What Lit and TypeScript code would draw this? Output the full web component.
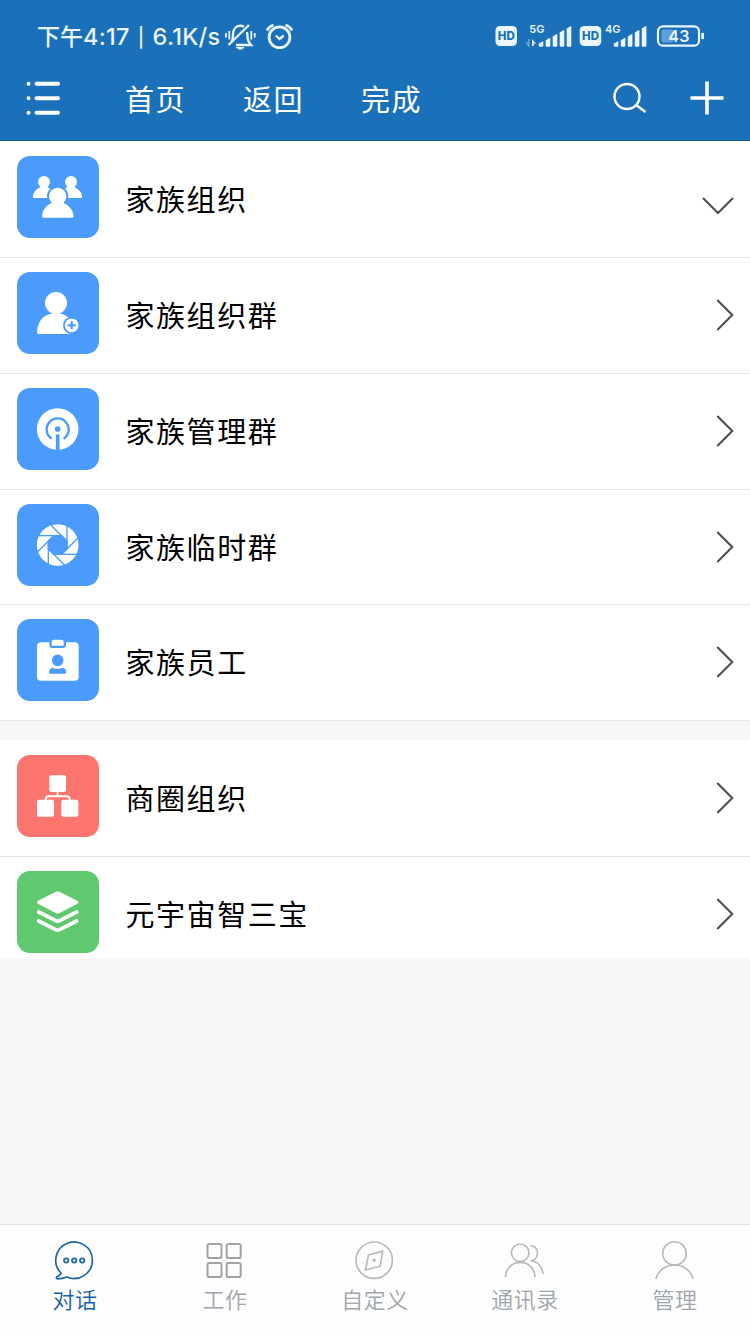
import { LitElement, html, css, svg } from "lit";
import { customElement, property } from "lit/decorators.js";

const tileIcons: Record<string, unknown> = {
  people: svg`
    <g fill="#fff">
      <circle cx="81" cy="78" r="18"/><path d="M48 124q0-16 13-25q10-8 20-8q10 0 20 8q13 9 13 25q0 2-2 2H50q-2 0-2-2z"/>
      <circle cx="162" cy="78" r="18"/><path d="M129 124q0-16 13-25q10-8 20-8q10 0 20 8q13 9 13 25q0 2-2 2H131q-2 0-2-2z"/>
      <circle cx="122" cy="121" r="32" fill="#4a9bfb"/>
      <path d="M75 180q1-20 19-34q14-9 28-9q14 0 28 9q18 14 20 34q0 5-5 5H80q-5 0-5-5z"/>
      <circle cx="122" cy="121" r="26"/>
    </g>`,
  personAdd: svg`
    <g fill="#fff">
      <circle cx="117" cy="93" r="33"/>
      <path d="M60 181q1-30 20-46q18-12 37-12q19 0 37 13q16 13 16 50H65q-5 0-5-5z"/>
      <circle cx="164" cy="160" r="26" fill="#4a9bfb"/><circle cx="164" cy="160" r="20.500"/>
      <path d="M164 148v24M152 160h24" stroke="#4a9bfb" stroke-width="6.500"/>
    </g>`,
  podcast: svg`
    <circle cx="122" cy="123" r="62.500" fill="#fff"/>
    <path d="M104 152A33 33 0 1 1 140 152" fill="none" stroke="#4a9bfb" stroke-width="7"/>
    <circle cx="122" cy="123" r="8.500" fill="#4a9bfb"/><path d="M122 139v48" stroke="#4a9bfb" stroke-width="11"/>`,
  aperture: svg`
    <circle cx="122" cy="123" r="62.500" fill="#fff"/>
    <g transform="translate(122 123)" fill="none" stroke="#4a9bfb" stroke-width="4">
      <path d="M-11.600-28H11.600L28-11.600V11.600L11.600 28H-11.600L-28 11.600V-11.600z" fill="#4a9bfb"/>
      ${[0, 45, 90, 135, 180, 225, 270, 315].map((a) => svg`<path d="M-57-28H11" transform="rotate(${a})"/>`)}
    </g>`,
  badge: svg`
    <rect x="60" y="70" width="125" height="115" rx="12" fill="#fff"/>
    <path d="M97 66H147V78q0 9-9 9H106q-9 0-9-9z" fill="#4a9bfb"/>
    <path d="M104 80V69q0-7 8-7h20q8 0 8 7V80z" fill="#fff"/>
    <circle cx="122" cy="124" r="17.500" fill="#4a9bfb"/>
    <path d="M96 160q0-10 10-14q16 7 32 0q10 4 10 14q0 4-4 4H100q-4 0-4-4z" fill="#4a9bfb"/>`,
  sitemap: svg`
    <g fill="#fff"><rect x="97" y="61" width="50" height="50" rx="6"/><rect x="60" y="134" width="51" height="51" rx="6"/><rect x="133" y="134" width="51" height="51" rx="6"/></g>
    <path d="M122 108v16M86 138v-5q0-9 9-9h54q9 0 9 9v5" fill="none" stroke="#fff" stroke-width="6"/>`,
  layers: svg`
    <path d="M117 62q5-2 10 0l54 27q6 4 0 9l-53 28q-6 3-12 0L63 98q-6-5 0-9z" fill="#fff"/>
    <path d="M65 123l51 26q6 3 12 0l51-26M65 150l51 26q6 3 12 0l51-26" fill="none" stroke="#fff" stroke-width="11" stroke-linecap="round"/>`,
};

const tabIcons: Record<string, unknown> = {
  chat: svg`<path d="M6 32A18.300 18.300 0 1 1 11.800 36Q7.500 37.800 2.200 37.800Q.8 37.400 1.800 36Q6 33.500 6 32z" stroke-width="1.700"/>
    <g stroke-width="1.700"><circle cx="11.200" cy="19.500" r="2.200"/><circle cx="19.200" cy="19.500" r="2.200"/><circle cx="27.200" cy="19.500" r="2.200"/></g>`,
  grid: svg`<g stroke-width="2"><rect x="2.500" y="3" width="14" height="14" rx="1.800"/><rect x="21.700" y="3" width="14" height="14" rx="1.800"/>
    <rect x="2.500" y="22" width="14" height="14" rx="1.800"/><rect x="21.700" y="22" width="14" height="14" rx="1.800"/></g>`,
  compass: svg`<circle cx="19.200" cy="19.200" r="18.200"/><path d="M13.500 14L27.800 10.200L25.200 25.200L10.500 29z"/><circle cx="19.200" cy="19.200" r="1"/>`,
  contacts: svg`<circle cx="15.200" cy="11.800" r="8.800"/><path d="M.5 36C1 16.500 29.700 16.500 30 36M25.500 4.700C34.800 4.500 34.800 19.300 25.500 19.800C33 20.300 37.800 26 38 33"/>`,
  person: svg`<circle cx="19.500" cy="12.400" r="11.700"/><path d="M.8 38C6 19.300 33 19.300 38.200 38"/>`,
};

@customElement("list-row")
class ListRow extends LitElement {
  @property() label = "";
  @property() icon = "";
  @property() tone = "blue";
  @property({ type: Boolean }) open = false;
  static styles = css`
    :host { display: flex; box-sizing: border-box; height: 115.850px; padding: 15px 16px 0 17px; background: #fff; box-shadow: inset 0 1px 0 #e7e7e7, 0 1px 0 #e7e7e7; }
    :host(.first) { box-shadow: none; }
    :host(.final) { height: 102px; box-shadow: inset 0 1px 0 #e7e7e7; }
    .tile { width: 82px; height: 82px; flex: none; border-radius: 13px; }
    .blue { background: #4a9bfb; }
    .red { background: #fc766f; }
    .green { background: #60c970; }
    .tile svg { display: block; width: 82px; height: 82px; }
    .label { flex: 1; margin-left: 26.500px; height: 84px; line-height: 84px; font-size: 29px; letter-spacing: 1.550px; color: #000; }
    .arrow { width: 32px; height: 32px; margin-top: 27px; fill: none; stroke: #4c4c4e; stroke-width: 2; }
    .down { margin-top: 34px; }
  `;
  render() {
    return html`
      <div class="tile ${this.tone}"><svg viewBox="0 0 246 246">${tileIcons[this.icon]}</svg></div>
      <div class="label">${this.label}</div>
      ${this.open
        ? html`<svg class="arrow down" viewBox="0 0 32 32"><path d="M1 8L16 23L31 8"/></svg>`
        : html`<svg class="arrow" viewBox="0 0 32 32"><path d="M15.300 1L30.300 16L15.300 31"/></svg>`}
    `;
  }
}

@customElement("app-root")
class AppRoot extends LitElement {
  static styles = css`
    :host { display: flex; flex-direction: column; height: 1334px; width: 750px; overflow: hidden; background: #f7f7f7; font-family: "Noto Sans CJK SC", sans-serif; }
    header { height: 141px; background: #1a70b9; color: #fff; flex: none; box-sizing: border-box; border-bottom: 1px solid #0e5fa8; }
    .status { display: flex; padding: 12px 43px 0 37px; align-items: center; color: #eaf5fc; box-sizing: border-box; height: 62px; }
    .clock { width: 187px; white-space: pre; font-size: 23px; font-weight: 500; line-height: 30px; margin-top: -1px; }
    .latin { font-family: Inter, sans-serif; font-size: 23.500px; letter-spacing: 0.250px; }
    .bar { font-size: 19px; margin: 0 1.500px; position: relative; top: -1px; }
    .modes { width: 72px; height: 30px; }
    .signal { width: 212px; height: 30px; margin-left: auto; }
    .signal text { font-family: Inter, sans-serif; font-weight: 600; }
    .signal .hd { font-weight: 800; }
    .nav { display: flex; align-items: center; height: 72px; padding: 0 26px; }
    .menu { width: 36px; height: 36px; margin-right: 63px; }
    .link { font-size: 29px; letter-spacing: 1.450px; line-height: 44px; margin-right: 57.100px; margin-top: -1px; }
    .search { width: 36px; height: 36px; margin-left: auto; }
    .plus { width: 34px; height: 34px; margin-left: 42px; }
    .gap { height: 19.700px; }
    main { flex: 1; }
    footer { display: grid; grid-template-columns: repeat(5, 1fr); height: 110px; box-sizing: border-box; border-top: 1px solid #e2e2e2; background: #fdfdfd; flex: none; }
    .tab { display: flex; flex-direction: column; align-items: center; padding-top: 16px; color: #a0a6ad; }
    .tab svg { width: 39px; height: 40px; margin-left: -1px; fill: none; stroke: #b8b8b8; stroke-width: 1.600; overflow: visible; }
    .tab .grid { stroke: #a3a3a3; }
    .tab .chat { stroke: #1a66a5; }
    .tab span { font-size: 22px; letter-spacing: 0.500px; line-height: 32px; margin-top: 1px; font-weight: 350; }
    .active { color: #14609f; }
  `;
  render() {
    const bars = (x: number) =>
      [41.3, 37.7, 34, 30, 26].map((y, i) => svg`<path d="M${x + i * 7} 45.500V${y + 2.5}L${x + i * 7 + 3.6} ${y + 0.3}H${x + i * 7 + 4.6}V45.500q0 1.300-1.300 1.300h-2q-1.300 0-1.300-1.300z"/>`);
    const tabs = [["chat", "对话"], ["grid", "工作"], ["compass", "自定义"], ["contacts", "通讯录"], ["person", "管理"]];
    return html`
      <header>
        <div class="status">
          <div class="clock">下午<span class="latin">4:17 <span class="bar">|</span> 6.1K/s</span></div>
          <svg class="modes" viewBox="224 22 72 30" fill="none" stroke="#eaf5fc" stroke-width="2.400">
            <path d="M231.500 42.500Q233 40 233 35C233 29 236 25.800 240 25.800Q242 25.800 244 26.800M247 32Q247.500 35 247.500 37Q248 42 251 45H236M228.500 45L249 25"/>
            <path d="M236.500 47.500H244Q240.500 51 236.500 47.500z" fill="#eaf5fc" stroke-width="1"/>
            <path d="M226 33v4.500M229.300 31v8.500M251.300 31v8.500M254.700 33v4.500" stroke-width="1.800"/>
            <circle cx="279.500" cy="37.300" r="10.400" stroke-width="2.800"/>
            <path d="M267 30.500Q269 26.500 273.500 25M292 30.500Q290 26.500 285.500 25" stroke-width="2.800"/>
            <path d="M275.800 35.500L279.500 39L283.800 35.500" stroke-width="2.400"/>
          </svg>
          <svg class="signal" viewBox="495 22 212 30" fill="#eaf5fc">
            <rect x="495.500" y="26" width="21.500" height="20" rx="4.500"/>
            <text class="hd" x="506.300" y="40.200" font-size="11.500" text-anchor="middle" fill="#1a70b9">HD</text>
            <text x="529.300" y="32.800" font-size="11">5G</text>
            <path d="M526 42l2.800 4V39M528.800 46V39" stroke="#7fb0dc" stroke-width="1.200" fill="none"/>
            <path d="M532 46V39l4 4.500h-2.200V46z"/>
            ${bars(538.7)}
            <rect x="579.700" y="26" width="21.500" height="20" rx="4.500"/>
            <text class="hd" x="590.500" y="40.200" font-size="11.500" text-anchor="middle" fill="#1a70b9">HD</text>
            <text x="605" y="32.800" font-size="11">4G</text>
            ${bars(613.8)}
            <rect x="658" y="26.300" width="41" height="19.400" rx="5" fill="none" stroke="#eaf5fc" stroke-width="2.200"/>
            <rect x="661.500" y="29.500" width="12" height="13" rx="2" fill="#619fd6"/>
            <rect x="701.300" y="32.800" width="2.700" height="6.500" rx="1"/>
            <text x="679" y="42.200" font-size="16" text-anchor="middle" letter-spacing=".3">43</text>
          </svg>
        </div>
        <div class="nav">
          <svg class="menu" viewBox="26 80 36 36" stroke="#fff" stroke-width="4" stroke-linecap="round">
            <path d="M36.500 83.700H58M36.500 98.200H58M36.500 112.700H58"/><path d="M28.500 83.700h.01M28.500 98.200h.01M28.500 112.700h.01"/>
          </svg>
          <span class="link">首页</span><span class="link">返回</span><span class="link">完成</span>
          <svg class="search" viewBox="612 80 36 36" fill="none" stroke="#fff" stroke-width="2.400"><circle cx="627" cy="96.500" r="12.500"/><path d="M635.500 104.500L645.500 112"/></svg>
          <svg class="plus" viewBox="0 0 34 34" stroke="#fff" stroke-width="3.600"><path d="M17 .5V33.500M.5 17H33.500"/></svg>
        </div>
      </header>
      <main>
        <list-row class="first" icon="people" label="家族组织" open></list-row>
        <list-row icon="personAdd" label="家族组织群"></list-row>
        <list-row icon="podcast" label="家族管理群"></list-row>
        <list-row icon="aperture" label="家族临时群"></list-row>
        <list-row icon="badge" label="家族员工"></list-row>
        <div class="gap"></div>
        <list-row class="first" icon="sitemap" tone="red" label="商圈组织"></list-row>
        <list-row class="final" icon="layers" tone="green" label="元宇宙智三宝"></list-row>
      </main>
      <footer>
        ${tabs.map(([icon, label], i) => html`<div class="tab ${i === 0 ? "active" : ""}"><svg class=${icon} viewBox="0 0 39 40">${tabIcons[icon]}</svg><span>${label}</span></div>`)}
      </footer>
    `;
  }
}
